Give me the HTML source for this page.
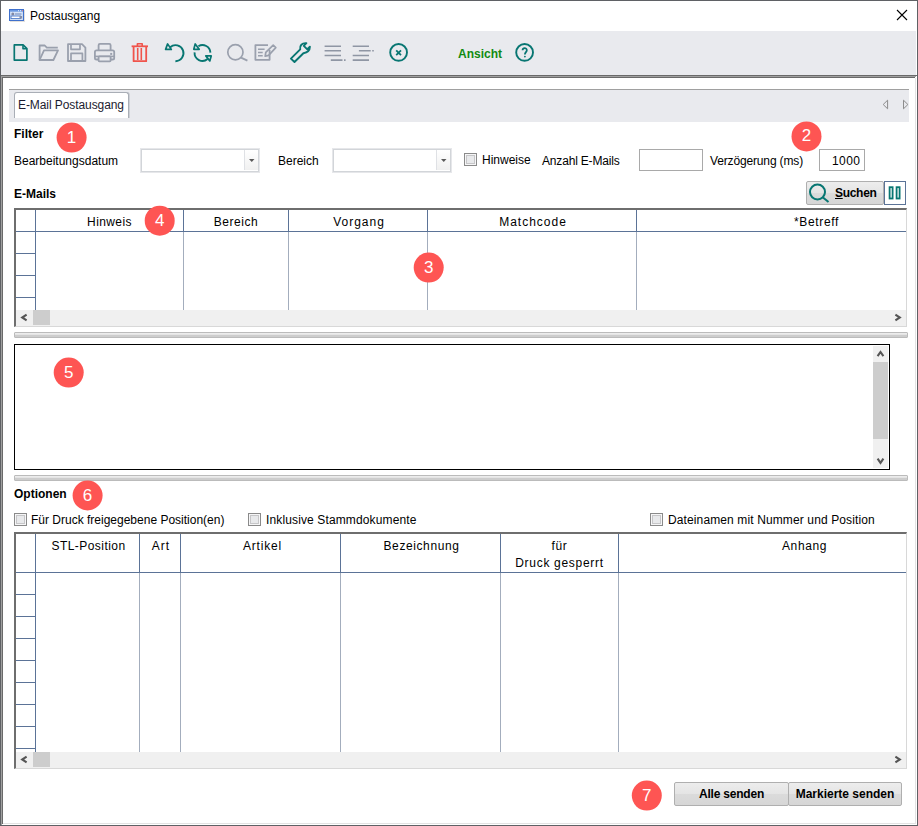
<!DOCTYPE html>
<html><head><meta charset="utf-8">
<style>
*{box-sizing:border-box;margin:0;padding:0}
html,body{width:918px;height:826px;overflow:hidden;background:#fff}
body{position:relative;font-family:"Liberation Sans",sans-serif;font-size:12px;color:#000}
.a{position:absolute}
.t{position:absolute;white-space:nowrap;line-height:14px;height:14px}
.b{font-weight:bold}
.badge{position:absolute;width:30px;height:30px;border-radius:50%;background:#fe5553;color:#fff;font-size:17px;line-height:30px;text-align:center}
.hl{position:absolute;height:1px;background:#5b7397}
.vl{position:absolute;width:1px;background:#5b7397}
.vb{position:absolute;width:1px;background:#a3adbd}
.cb{position:absolute;width:13px;height:13px;border:1px solid #8a8a8a;background:#f6f6f7}
.cb::after{content:"";box-sizing:border-box;position:absolute;left:1px;top:1px;width:9px;height:9px;border:1px solid #c6c6c8;background:#e8e9eb}
.combo{position:absolute;height:25px;border:1px solid #e6e7ea;background:#fff}.combo::after{content:"";box-sizing:border-box;position:absolute;left:0;top:0;right:0;bottom:0;border:1px solid #d2d5d9}
.inp{position:absolute;border:1px solid #a9a9a9;background:#fff}
.btn{position:absolute;border:1px solid #afafaf;border-radius:2px;background:linear-gradient(#ededed,#e4e4e4 50%,#dbdbdb 51%,#d6d6d6);font-weight:bold;text-align:center;line-height:22px}
.sb{position:absolute;background:#f0f0f0}
.split{position:absolute;height:6px;border:1px solid #bbbbbb;border-radius:1px;background:linear-gradient(#ececec 0 25%,#e4e4e4 25% 50%,#cdcdcd 50% 100%)}
.hdr{position:absolute;text-align:center;line-height:14px;white-space:nowrap}
</style></head><body>

<!-- window border -->
<div class="a" style="left:0;top:0;width:918px;height:826px;border:1px solid #5f6165"></div>

<!-- title bar -->
<svg class="a" style="left:9px;top:9px" width="17" height="14" viewBox="0 0 17 14">
  <rect x="1" y="1" width="15" height="12" fill="#d0ccc4" opacity="0.6"/>
  <rect x="0.5" y="0.5" width="14" height="11" fill="#bcd2f3" stroke="#3f70cc"/>
  <rect x="1" y="1" width="13" height="1.6" fill="#6a98e2"/>
  <rect x="9" y="1.2" width="1" height="1" fill="#e8f0ff"/><rect x="11" y="1.2" width="1" height="1" fill="#e8f0ff"/><rect x="13" y="1.2" width="1" height="1" fill="#f08070"/>
  <rect x="1.5" y="3" width="12" height="8" fill="#d6e4f8"/>
  <circle cx="3.8" cy="5" r="1.5" fill="#8088a4"/>
  <rect x="6" y="4.4" width="6.5" height="1.2" fill="#7f95c0"/>
  <rect x="2" y="7" width="9.5" height="2.6" fill="#fff" stroke="#4a78c8" stroke-width="0.9"/>
  <rect x="10.5" y="7" width="2.6" height="2.6" fill="#8a90a6"/>
</svg>
<div class="t" style="left:30px;top:9px">Postausgang</div>
<svg class="a" style="left:896px;top:9px" width="12" height="12" viewBox="0 0 12 12">
  <path d="M1 1L11 11M11 1L1 11" stroke="#000" stroke-width="1.1"/>
</svg>

<!-- toolbar -->
<div class="a" style="left:1px;top:31px;width:915px;height:44px;background:#e9eaee"></div>


<!-- main panel borders -->
<div class="a" style="left:1px;top:75px;width:916px;height:1px;background:#6a6a6a"></div>
<div class="a" style="left:1px;top:76px;width:915px;height:1px;background:#a0a0a0"></div>
<div class="a" style="left:2px;top:77px;width:913px;height:1px;background:#6a6a6a"></div>
<div class="a" style="left:1px;top:76px;width:1px;height:749px;background:#a0a0a0"></div>
<div class="a" style="left:2px;top:77px;width:1px;height:747px;background:#6a6a6a"></div>
<div class="a" style="left:915px;top:78px;width:1px;height:746px;background:#e3e3e3"></div>
<div class="a" style="left:3px;top:823px;width:913px;height:1px;background:#e3e3e3"></div>

<!-- tab strip -->
<div class="a" style="left:9px;top:89px;width:900px;height:33px;background:#e9eaee;border-top:1px solid #a0a0a0"></div>
<div class="a" style="left:14px;top:92px;width:115px;height:26px;background:#fff;border:1px solid #a9aeb6;border-bottom:none;border-radius:3px 3px 0 0;box-shadow:1px 0 0 #cdd0d6"></div>
<div class="t" style="left:18px;top:98px;color:#1c1c30;letter-spacing:-0.08px">E-Mail Postausgang</div>
<svg class="a" style="left:880px;top:98px" width="30" height="12" viewBox="0 0 30 12">
  <path d="M7.6 2.2L3.2 6.5L7.6 10.8Z" fill="none" stroke="#8c8c8c" stroke-width="1"/>
  <path d="M23.5 2.2L27.9 6.5L23.5 10.8Z" fill="none" stroke="#8c8c8c" stroke-width="1"/>
</svg>

<!-- Filter -->
<div class="t b" style="left:14px;top:127px">Filter</div>
<div class="t" style="left:14px;top:154px">Bearbeitungsdatum</div>
<div class="combo" style="left:140px;top:148px;width:120px"></div>
<div class="a" style="left:244px;top:150px;width:1px;height:20px;background:#dfe1e5"></div>
<div class="a" style="left:245px;top:150px;width:13px;height:20px;background:linear-gradient(#fff,#f0f0f0)"></div>
<svg class="a" style="left:249px;top:159px" width="6" height="4"><path d="M0 0H5.5L2.75 3Z" fill="#5a5a5a"/></svg>
<div class="t" style="left:278px;top:154px">Bereich</div>
<div class="combo" style="left:332px;top:148px;width:120px"></div>
<div class="a" style="left:436px;top:150px;width:1px;height:20px;background:#dfe1e5"></div>
<div class="a" style="left:437px;top:150px;width:13px;height:20px;background:linear-gradient(#fff,#f0f0f0)"></div>
<svg class="a" style="left:441px;top:159px" width="6" height="4"><path d="M0 0H5.5L2.75 3Z" fill="#5a5a5a"/></svg>
<div class="cb" style="left:464px;top:153px"></div>
<div class="t" style="left:482px;top:153px">Hinweise</div>
<div class="t" style="left:542px;top:154px;letter-spacing:-0.18px">Anzahl E-Mails</div>
<div class="inp" style="left:639px;top:149px;width:64px;height:22px"></div>
<div class="t" style="left:710px;top:154px;letter-spacing:-0.15px">Verzögerung (ms)</div>
<div class="inp" style="left:819px;top:149px;width:46px;height:22px"></div>
<div class="t" style="left:832px;top:154px;letter-spacing:0.4px">1000</div>

<!-- E-Mails -->
<div class="t b" style="left:14px;top:187px">E-Mails</div>
<div class="btn" style="left:806px;top:181px;width:78px;height:24px"></div>
<svg class="a" style="left:808px;top:183px" width="24" height="20" viewBox="0 0 24 20">
  <circle cx="9.5" cy="9" r="7.5" fill="none" stroke="#087672" stroke-width="2"/>
  <path d="M15 14.5L20.5 19" stroke="#087672" stroke-width="2"/>
</svg>
<div class="t b" style="left:835px;top:186px;letter-spacing:-0.3px"><span style="text-decoration:underline;text-underline-offset:1px">S</span>uchen</div>
<div class="a" style="left:884px;top:181px;width:22px;height:24px;border:1px solid #5b7397;background:#fff"></div>
<svg class="a" style="left:888px;top:186px" width="14" height="14" viewBox="0 0 14 14">
  <rect x="1.6" y="1.2" width="3" height="11.3" fill="none" stroke="#087672" stroke-width="1.8"/>
  <rect x="8.6" y="1.2" width="3" height="11.3" fill="none" stroke="#087672" stroke-width="1.8"/>
</svg>

<!-- grid 1 -->
<div class="a" style="left:14px;top:208px;width:893px;height:119px;border:1px solid #d8d8d8;border-top:2px solid #6e6e6e;border-left:2px solid #6e6e6e;background:#fff"></div>
<div class="hl" style="left:16px;top:231px;width:890px"></div>
<div class="vl" style="left:35px;top:210px;height:100px"></div>
<div class="hl" style="left:16px;top:253px;width:19px"></div>
<div class="hl" style="left:16px;top:275px;width:19px"></div>
<div class="hl" style="left:16px;top:297px;width:19px"></div>
<div class="vl" style="left:183px;top:210px;height:21px"></div>
<div class="vb" style="left:183px;top:232px;height:78px"></div>
<div class="vl" style="left:288px;top:210px;height:21px"></div>
<div class="vb" style="left:288px;top:232px;height:78px"></div>
<div class="vl" style="left:427px;top:210px;height:21px"></div>
<div class="vb" style="left:427px;top:232px;height:78px"></div>
<div class="vl" style="left:636px;top:210px;height:21px"></div>
<div class="vb" style="left:636px;top:232px;height:78px"></div>
<div class="hdr" style="left:36px;top:215px;width:147px;letter-spacing:0.4px">Hinweis</div>
<div class="hdr" style="left:184px;top:215px;width:104px;letter-spacing:0.55px">Bereich</div>
<div class="hdr" style="left:290px;top:215px;width:138px;letter-spacing:1px">Vorgang</div>
<div class="hdr" style="left:429px;top:215px;width:208px;letter-spacing:1px">Matchcode</div>
<div class="t" style="left:794px;top:215px;letter-spacing:0.65px">*Betreff</div>
<div class="sb" style="left:16px;top:310px;width:890px;height:16px"></div>
<div class="a" style="left:33px;top:310px;width:17px;height:15px;background:#cdcdcd"></div>
<svg class="a" style="left:20px;top:313px" width="9" height="9" viewBox="0 0 9 9"><path d="M6.6 1.6L2.2 4.5L6.6 7.4" fill="none" stroke="#555" stroke-width="2.1"/></svg>
<svg class="a" style="left:894px;top:313px" width="9" height="9" viewBox="0 0 9 9"><path d="M1.4 1.6L5.8 4.5L1.4 7.4" fill="none" stroke="#555" stroke-width="2.1"/></svg>

<!-- splitter 1 -->
<div class="split" style="left:14px;top:332px;width:894px"></div>

<!-- text area -->
<div class="a" style="left:14px;top:344px;width:876px;height:126px;border:1px solid #000;background:#fff"></div>
<div class="sb" style="left:873px;top:346px;width:15px;height:122px"></div>
<div class="a" style="left:873px;top:362px;width:15px;height:77px;background:#cdcdcd"></div>
<svg class="a" style="left:876px;top:349px" width="9" height="9" viewBox="0 0 9 9"><path d="M1.6 7.2L4.5 3L7.4 7.2" fill="none" stroke="#555" stroke-width="2.1"/></svg>
<svg class="a" style="left:876px;top:456px" width="9" height="9" viewBox="0 0 9 9"><path d="M1.6 2.6L4.5 6.8L7.4 2.6" fill="none" stroke="#555" stroke-width="2.1"/></svg>

<!-- splitter 2 -->
<div class="split" style="left:14px;top:475px;width:894px"></div>

<!-- Optionen -->
<div class="t b" style="left:14px;top:487px">Optionen</div>
<div class="cb" style="left:14px;top:513px"></div>
<div class="t" style="left:31px;top:513px">Für Druck freigegebene Position(en)</div>
<div class="cb" style="left:248px;top:513px"></div>
<div class="t" style="left:266px;top:513px;letter-spacing:0.13px">Inklusive Stammdokumente</div>
<div class="cb" style="left:650px;top:513px"></div>
<div class="t" style="left:668px;top:513px;letter-spacing:0.12px">Dateinamen mit Nummer und Position</div>

<!-- grid 2 -->
<div class="a" style="left:14px;top:532px;width:893px;height:237px;border:1px solid #d8d8d8;border-top:2px solid #6e6e6e;border-left:2px solid #6e6e6e;background:#fff"></div>
<div class="hl" style="left:16px;top:572px;width:890px"></div>
<div class="vl" style="left:35px;top:534px;height:218px"></div>
<div class="hl" style="left:16px;top:594px;width:19px"></div>
<div class="hl" style="left:16px;top:616px;width:19px"></div>
<div class="hl" style="left:16px;top:638px;width:19px"></div>
<div class="hl" style="left:16px;top:660px;width:19px"></div>
<div class="hl" style="left:16px;top:682px;width:19px"></div>
<div class="hl" style="left:16px;top:704px;width:19px"></div>
<div class="hl" style="left:16px;top:726px;width:19px"></div>
<div class="hl" style="left:16px;top:748px;width:19px"></div>
<div class="vl" style="left:139px;top:534px;height:38px"></div>
<div class="vb" style="left:139px;top:573px;height:179px"></div>
<div class="vl" style="left:180px;top:534px;height:38px"></div>
<div class="vb" style="left:180px;top:573px;height:179px"></div>
<div class="vl" style="left:340px;top:534px;height:38px"></div>
<div class="vb" style="left:340px;top:573px;height:179px"></div>
<div class="vl" style="left:500px;top:534px;height:38px"></div>
<div class="vb" style="left:500px;top:573px;height:179px"></div>
<div class="vl" style="left:618px;top:534px;height:38px"></div>
<div class="vb" style="left:618px;top:573px;height:179px"></div>
<div class="hdr" style="left:37px;top:539px;width:103px;letter-spacing:0.45px">STL-Position</div>
<div class="hdr" style="left:141px;top:539px;width:40px;letter-spacing:1px">Art</div>
<div class="hdr" style="left:183px;top:539px;width:159px;letter-spacing:0.8px">Artikel</div>
<div class="hdr" style="left:342px;top:539px;width:159px;letter-spacing:0.6px">Bezeichnung</div>
<div class="hdr" style="left:501px;top:538px;width:117px;line-height:17px;letter-spacing:0.7px">für<br>Druck gesperrt</div>
<div class="t" style="left:782px;top:539px;letter-spacing:0.6px">Anhang</div>
<div class="sb" style="left:16px;top:752px;width:890px;height:16px"></div>
<div class="a" style="left:33px;top:752px;width:17px;height:15px;background:#cdcdcd"></div>
<svg class="a" style="left:20px;top:755px" width="9" height="9" viewBox="0 0 9 9"><path d="M6.6 1.6L2.2 4.5L6.6 7.4" fill="none" stroke="#555" stroke-width="2.1"/></svg>
<svg class="a" style="left:894px;top:755px" width="9" height="9" viewBox="0 0 9 9"><path d="M1.4 1.6L5.8 4.5L1.4 7.4" fill="none" stroke="#555" stroke-width="2.1"/></svg>

<!-- bottom buttons -->
<div class="btn" style="left:674px;top:782px;width:115px;height:24px;letter-spacing:-0.2px">Alle senden</div>
<div class="btn" style="left:788px;top:782px;width:114px;height:24px">Markierte senden</div>

<!-- TOOLBAR ICONS -->
<svg class="a" style="left:0;top:0" width="560" height="75" viewBox="0 0 560 75">
<g fill="none" stroke-linejoin="round" stroke-linecap="butt">
 <!-- new -->
 <path d="M14.3 44.9H23.1L26.9 48.7V60.1H14.3Z" stroke="#087672" stroke-width="1.7"/>
 <path d="M23 45.2V48.8H26.6" stroke="#087672" stroke-width="1.6"/>
 <!-- open folder -->
 <path d="M39.6 60V45.5H44.8L46.8 47.6H57.8" stroke="#9aa0ad" stroke-width="1.8"/>
 <path d="M39.6 60L44 50.4H58L53.4 60Z" stroke="#9aa0ad" stroke-width="1.8"/>
 <!-- save -->
 <path d="M68 44.2H82L85.4 47.6V61H68Z" stroke="#9aa0ad" stroke-width="1.8"/>
 <path d="M71 44.5V49.3H80V44.5" stroke="#9aa0ad" stroke-width="1.7"/>
 <path d="M71 61V53.4H82.4V61" stroke="#9aa0ad" stroke-width="1.7"/>
 <!-- print -->
 <path d="M98.6 50V45.2Q98.6 43.9 99.9 43.9H109.3Q110.6 43.9 110.6 45.2V50" stroke="#9aa0ad" stroke-width="1.8"/>
 <rect x="94.9" y="50.3" width="19.3" height="9.2" rx="1.6" stroke="#9aa0ad" stroke-width="1.8"/>
 <path d="M95 56.4H114" stroke="#9aa0ad" stroke-width="1.6"/>
 <rect x="98.6" y="56.4" width="12" height="4.9" rx="0.8" fill="#e9eaee" stroke="#9aa0ad" stroke-width="1.8"/>
 <rect x="110.2" y="52.9" width="2" height="2" fill="#9aa0ad" stroke="none"/>
 <!-- trash -->
 <path d="M131.6 46.3H148" stroke="#f0544c" stroke-width="1.8"/>
 <path d="M137.4 46V43.8H142.2V46" stroke="#f0544c" stroke-width="1.6"/>
 <path d="M133.6 47V61.2H146.2V47" stroke="#f0544c" stroke-width="1.8"/>
 <path d="M137.7 48V60M141.3 48V60" stroke="#f0544c" stroke-width="1.6"/>
 <!-- undo -->
 <path d="M170.2 47.2A8 8 0 1 1 175.4 61.2" stroke="#087672" stroke-width="1.9"/>
 <path d="M165.6 49.4H171.3L167.6 43.9Z" stroke="#087672" stroke-width="1.7"/>
 <!-- refresh -->
 <path d="M198.4 46.2A7.9 7.9 0 0 1 210.4 52.6" stroke="#087672" stroke-width="1.9"/>
 <path d="M194.6 52.4A7.9 7.9 0 0 0 207.6 59" stroke="#087672" stroke-width="1.9"/>
 <path d="M193.8 49.3H199.2L195.2 44Z" stroke="#087672" stroke-width="1.7"/>
 <path d="M205.8 55.9H211.2L209.8 60.9Z" stroke="#087672" stroke-width="1.7"/>
 <!-- search -->
 <circle cx="235.4" cy="52.2" r="7.6" stroke="#9aa0ad" stroke-width="1.7"/>
 <path d="M241 57.6L247.4 60.6" stroke="#9aa0ad" stroke-width="1.8"/>
 <!-- edit -->
 <path d="M269.6 50V59.8H255.4V45.1H268" stroke="#9aa0ad" stroke-width="1.8"/>
 <path d="M258 49.3H264.6M258 52.5H262.7M258 55.7H262.7" stroke="#9aa0ad" stroke-width="1.5"/>
 <path d="M265.2 56.2L265.8 52.4L273.2 45.2L275.8 47.6L268.6 55.4Z" stroke="#9aa0ad" stroke-width="1.7"/>
 <!-- wrench -->
 <path d="M290.9 58.6L294.5 62L303.4 53.2C306.2 52.8 309.8 51.4 309.9 46.8L307.3 49.3L303.8 45.8L306.4 43.2C302 42.8 299.4 45.6 300.2 49.4Z" stroke="#087672" stroke-width="1.9"/>
 <!-- lists -->
 <path d="M324.6 46.2H341M324.6 50.8H341M324.6 55.5H341M330.8 60.1H342.5M344 60.1H345.6" stroke="#8f96a4" stroke-width="1.6"/>
 <path d="M352.7 46.2H369M358.9 50.8H370.7M372.2 50.8H373.8M352.7 55.5H369M352.7 60.1H369" stroke="#8f96a4" stroke-width="1.6"/>
 <!-- close circle -->
 <circle cx="398.6" cy="52.4" r="8.4" stroke="#087672" stroke-width="1.9"/>
 <path d="M396.2 50.4L401 55.2M401 50.4L396.2 55.2" stroke="#087672" stroke-width="1.8"/>
 <!-- help -->
 <circle cx="524.6" cy="52.4" r="8.4" stroke="#087672" stroke-width="1.9"/>
 <path d="M522.6 50.3C522.4 47.6 526.8 47.4 526.8 50.2C526.8 52.2 524.9 52.2 524.9 54.6" stroke="#087672" stroke-width="1.8"/>
 <circle cx="524.9" cy="56.6" r="0.9" fill="#087672" stroke="none"/>
</g>
</svg>
<div class="t b" style="left:458px;top:47px;color:#118a11">Ansicht</div>

<!-- badges -->
<div class="badge" style="left:57px;top:123px;transform:translate(-0.4px,-0.4px)">1</div>
<div class="badge" style="left:792px;top:122px;transform:translate(-0.5px,-0.6px)">2</div>
<div class="badge" style="left:414px;top:253px;transform:translate(-0.3px,-0.4px)">3</div>
<div class="badge" style="left:145px;top:206px;transform:translate(-0.3px,-0.3px)">4</div>
<div class="badge" style="left:54px;top:358px;transform:translate(-0.3px,-0.4px)">5</div>
<div class="badge" style="left:73px;top:481px;transform:translate(-0.4px,-0.5px)">6</div>
<div class="badge" style="left:632px;top:781px;transform:translate(-0.2px,-0.4px)">7</div>

</body></html>
